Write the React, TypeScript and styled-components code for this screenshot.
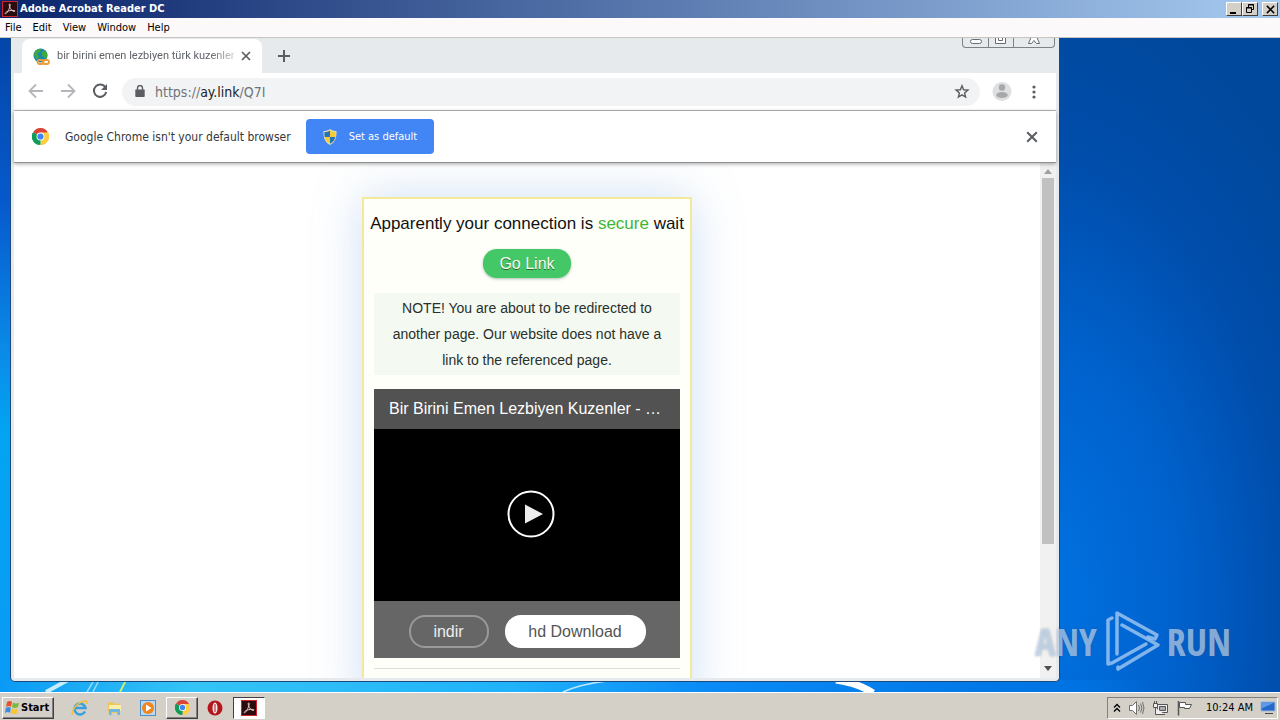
import React from "react";
import styled, { createGlobalStyle, css } from "styled-components";

const ui = `"DejaVu Sans Condensed", "DejaVu Sans", sans-serif`;
const web = `"Liberation Sans", Arial, sans-serif`;

const Global = createGlobalStyle`
  * { box-sizing: border-box; }
  body { margin: 0; font-family: ${ui}; font-size: 11px; }
  button { font: inherit; padding: 0; border: 0; background: none; color: inherit; }
  svg { display: block; flex: none; }
  h1, p { margin: 0; }
`;

const Screen = styled.div`
  display: flex;
  flex-direction: column;
  height: 100vh;
  overflow: hidden;
`;

const TitleBar = styled.header`
  display: flex;
  align-items: center;
  gap: 2px;
  flex: none;
  height: 18px;
  padding: 0 2px 0 2px;
  background: linear-gradient(90deg, #0a246a, #a6caf0);
  color: #fff;
`;

const AppTitle = styled.h1`
  flex: 1;
  font-size: 11px;
  line-height: 16px;
  font-weight: 700;
`;

const WindowButton = styled.button<{ $spaced?: boolean }>`
  display: grid;
  place-items: center;
  width: 16px;
  height: 14px;
  margin-left: ${(p) => (p.$spaced ? 2 : -2)}px;
  background: #d4d0c8;
  border: 1px solid;
  border-color: #fff #404040 #404040 #fff;
  color: #000;
`;

const MenuBar = styled.nav`
  display: flex;
  align-items: center;
  gap: 11px;
  flex: none;
  height: 20px;
  padding: 0 5px;
  background: #fbf9fa;
  border-bottom: 1px solid #c9c6c2;
`;

const MenuItem = styled.button`
  color: #000;
  line-height: 16px;
  font-size: 11px;
`;

const Desktop = styled.main`
  position: relative;
  display: flex;
  flex: 1;
  min-height: 0;
  padding: 0 220px 10px 10px;
  background:
    linear-gradient(90deg, #0a9af5 0, #35c4f5 15%, #20b2fa 40%, #0a8bf5 55%, #0074e4 82%, transparent 90%) bottom / 100% 12px no-repeat,
    linear-gradient(180deg, #0446a8, #0659cc 25%, #0a8be8 48%, #02a4f2 60%, #0a9af5) left / 12px 100% no-repeat,
    radial-gradient(ellipse 360px 620px at 1030px 560px, #0074e4 0, #0061cc 42%, #004dab 72%, transparent 100%),
    linear-gradient(160deg, #00489c 82%, #0b4680 87%, #01408c 94%, #004aa5);
`;

const Streaks = styled.svg`
  position: absolute;
  left: 0;
  bottom: 0;
`;

const BrowserWindow = styled.section`
  position: relative;
  display: flex;
  flex-direction: column;
  flex: 1;
  min-width: 0;
  padding: 0 3px 3px 3px;
  background: #e7eaed;
  border: 1px solid #1c4a7c;
  border-top: 0;
  border-radius: 0 0 5px 5px;
`;

const TabStrip = styled.div`
  display: flex;
  align-items: center;
  justify-content: space-between;
  flex: none;
  height: 35px;
  padding-left: 8px;
`;

const TabGroup = styled.div`
  display: flex;
  align-items: center;
  gap: 15px;
  height: 100%;
`;

const Tab = styled.div`
  display: flex;
  align-items: center;
  gap: 7px;
  width: 240px;
  height: 34px;
  margin-top: 1px;
  padding: 0 11px 0 11px;
  background: #fff;
  border-radius: 8px 8px 0 0;
  color: #5f6368;
`;

const TabTitle = styled.span`
  flex: 1;
  overflow: hidden;
  white-space: nowrap;
  font-family: Roboto, sans-serif;
  font-size: 11px;
  line-height: 16px;
  mask-image: linear-gradient(90deg, #000 86%, rgba(0, 0, 0, 0.3));
`;

const IconButton = styled.button`
  display: grid;
  place-items: center;
  color: #5a5e62;
`;

const Caption = styled.div`
  display: flex;
  align-self: flex-start;
  height: 10px;
  margin-right: 1px;
  border: 1px solid #7d8286;
  border-top: 0;
  border-radius: 0 0 4px 4px;
`;

const CaptionButton = styled.button<{ $wide?: boolean }>`
  display: grid;
  place-items: start center;
  width: ${(p) => (p.$wide ? 41 : 25)}px;
  height: 9px;
  & + & { border-left: 1px solid #7d8286; }
`;

const Toolbar = styled.div`
  display: flex;
  align-items: center;
  gap: 12px;
  flex: none;
  height: 38px;
  padding: 0 12px 0 12px;
  background: #fff;
  border-bottom: 1px solid #b6b8ba;
`;

const NavGroup = styled.div`
  display: flex;
  gap: 12px;
`;

const AddressBar = styled.div`
  display: flex;
  align-items: center;
  gap: 8px;
  flex: 1;
  height: 28px;
  padding: 0 10px 0 11px;
  background: #f1f3f4;
  border-radius: 14px;
  color: #6f7378;
`;

const Url = styled.span`
  flex: 1;
  font-size: 14px;
  line-height: 20px;
  b { font-weight: 400; color: #202124; }
`;

const InfoBar = styled.div`
  position: relative;
  display: flex;
  align-items: center;
  flex: none;
  gap: 12px;
  height: 52px;
  padding: 0 18px 0 18px;
  background: #fff;
  border-bottom: 1px solid #8f9193;
  box-shadow: 0 1px 4px rgba(0, 0, 0, 0.35);
`;

const InfoText = styled.p`
  flex: none;
  margin: 0 3px 0 4px;
  font-size: 12px;
  line-height: 16px;
  color: #35373a;
`;

const DefaultButton = styled.button`
  display: flex;
  align-items: center;
  gap: 12px;
  height: 35px;
  padding: 0 17px;
  border-radius: 4px;
  background: #4285f4;
  color: #fff;
  font-size: 11px;
`;

const Spacer = styled.span`
  flex: 1;
`;

const Viewport = styled.div`
  display: flex;
  flex: 1;
  min-height: 0;
  background: #fff;
`;

const Page = styled.div`
  display: flex;
  justify-content: center;
  align-items: flex-start;
  flex: 1;
  overflow: hidden;
  padding-top: 34px;
  font-family: ${web};
`;

const Card = styled.article`
  display: flex;
  flex-direction: column;
  align-items: center;
  width: 330px;
  padding: 12px 10px 40px;
  background: #fffffa;
  border: 2px solid #f4e99b;
  box-shadow: 0 0 45px rgba(120, 165, 225, 0.36);
`;

const Status = styled.p`
  font-size: 17px;
  line-height: 26px;
  white-space: nowrap;
  color: #111;
  span { color: #3cb639; }
`;

const GoButton = styled.button`
  width: 88px;
  height: 29px;
  margin: 12px 0 15px;
  border-radius: 14px;
  background: #44c767;
  box-shadow: 0 1px 3px rgba(40, 90, 60, 0.4);
  color: #f4fff4;
  font-size: 16px;
  text-shadow: 0 1px 0 #2f6627;
`;

const Note = styled.p`
  align-self: stretch;
  padding: 2px 12px;
  background: #f4faf2;
  color: #2a302a;
  font-size: 14px;
  line-height: 26px;
  text-align: center;
`;

const Player = styled.div`
  align-self: stretch;
  margin: 14px 0 10px;
  background: #000;
`;

const PlayerTitle = styled.div`
  padding: 0 15px;
  background: #525252;
  color: #fff;
  font-size: 16px;
  line-height: 40px;
  white-space: nowrap;
`;

const Stage = styled.div`
  display: grid;
  place-items: center;
  height: 172px;
  padding: 0 0 2px 8px;
  color: #fff;
`;

const PlayerActions = styled.div`
  display: flex;
  justify-content: center;
  gap: 16px;
  padding: 14px 0 10px;
  background: #666;
`;

const Pill = styled.button<{ $solid?: boolean }>`
  width: ${(p) => (p.$solid ? 141 : 80)}px;
  height: 33px;
  border-radius: 16px;
  font-size: 16px;
  ${(p) =>
    p.$solid
      ? css`background: #fff; color: #555;`
      : css`border: 2px solid #999; color: #eee;`}
`;

const Rule = styled.hr`
  align-self: stretch;
  margin: 0;
  border: 0;
  border-top: 1px solid #dcdedc;
`;

const ScrollTrack = styled.div`
  display: flex;
  flex-direction: column;
  align-items: center;
  flex: none;
  width: 16px;
  padding: 6px 0 7px;
  background: #f1f1f1;
`;

const ScrollThumb = styled.div`
  width: 12px;
  height: 73%;
  margin: 4px 0 auto;
  background: #c1c1c1;
`;

const Watermark = styled.div`
  position: absolute;
  right: 49px;
  bottom: 18px;
  display: flex;
  align-items: center;
  gap: 7px;
  color: rgba(200, 222, 245, 0.65);
  font-family: "Open Sans Condensed", "Liberation Sans Narrow", "Liberation Sans", sans-serif;
  font-size: 38px;
  font-weight: 300;
  line-height: 66px;
  text-shadow: 0 0 3px rgba(60, 80, 110, 0.4);
`;

const Taskbar = styled.footer`
  display: flex;
  align-items: center;
  flex: none;
  height: 28px;
  padding: 2px 2px 0;
  background: #d4d0c8;
  border-top: 1px solid #fff;
`;

const StartButton = styled.button`
  display: flex;
  align-items: center;
  gap: 1px;
  width: 52px;
  height: 22px;
  margin-right: 10px;
  padding-left: 2px;
  border: 1px solid;
  border-color: #fff #404040 #404040 #fff;
  box-shadow: inset -1px -1px #808080;
  font-weight: 700;
  font-size: 11px;
`;

const TaskButton = styled.button<{ $state?: "open" | "active" }>`
  display: grid;
  place-items: center;
  width: 32px;
  height: 22px;
  margin-right: ${(p) => (p.$state ? 1 : 2)}px;
  border: 1px solid transparent;
  ${(p) => p.$state === "open" && css`
    border-color: #fff #404040 #404040 #fff;
    box-shadow: inset -1px -1px #808080;
  `}
  ${(p) => p.$state === "active" && css`
    background: #fff;
    border-color: #404040 #fff #fff #404040;
  `}
`;

const Tray = styled.div`
  display: flex;
  align-items: center;
  gap: 7px;
  height: 22px;
  margin-left: auto;
  padding: 0 1px 0 5px;
  border: 1px solid;
  border-color: #808080 #fff #fff #808080;
`;

const Clock = styled.time`
  margin-left: 6px;
  font-size: 11px;
  line-height: 16px;
`;

const AcrobatIcon = ({ size = 16 }: { size?: number }) => (
  <svg width={size} height={size} viewBox="0 0 16 16">
    <rect x=".5" y=".5" width="15" height="15" fill="#2b0b0e" stroke="#d3222a" />
    <path d="M3 12.500c1-2 5-3.500 9.500-3 1 .3.500 1.300-.8 1C9 9.500 7 6 7.200 3.500c.4-1.300 1.300-.6 1 .8C7.500 8 5 12.500 3.400 13" fill="none" stroke="#e3cccc" />
  </svg>
);

const ChromeIcon = ({ size = 17 }: { size?: number }) => (
  <svg width={size} height={size} viewBox="0 0 24 24">
    <path d="M12 12 1.600 6A12 12 0 0 1 22.400 6z" fill="#db4437" />
    <path d="M12 12 22.400 6A12 12 0 0 1 12 24z" fill="#ffcd40" />
    <path d="M12 12v12A12 12 0 0 1 1.600 6z" fill="#0f9d58" />
    <path d="M12 6.500h10.700A12 12 0 0 1 12 24l5-9z" fill="#ffcd40" />
    <path d="M1.600 6 7 15l5 3-3.500 5.500A12 12 0 0 1 1.600 6z" fill="#0f9d58" />
    <circle cx="12" cy="12" r="5.600" fill="#fff" />
    <circle cx="12" cy="12" r="4.400" fill="#4285f4" />
  </svg>
);

const GlobeIcon = () => (
  <svg width="17" height="17" viewBox="0 0 17 17">
    <circle cx="7.500" cy="7.500" r="7" fill="#1787b5" />
    <path d="M2 3.500C4 .8 7 .3 8 1L7 4 4 6l2 2-1 4C2 10 0 7 2 3.500zM9 4l3-2c3 3 3 7 1 9l-2-2-2-1z" fill="#41a83c" />
    <g fill="none" stroke="#ee9b3a" strokeWidth="1.800"><rect x="4.500" y="12" width="6" height="4" rx="2" /><rect x="10" y="12" width="6" height="4" rx="2" /></g>
  </svg>
);

const ShieldIcon = () => (
  <svg width="14" height="16" viewBox="0 0 14 16">
    <path d="M7 0c2 1.500 4 2 6.500 2 .3 6-1 11-6.500 14C1.500 13 .2 8 .5 2 3 2 5 1.500 7 0z" fill="#e8e0b0" />
    <path d="M7 1.500V8H1.600c-.2-1.500-.3-3-.2-5C3.500 3 5.500 2.500 7 1.500zM7 8h5.400c-.7 3-2.400 5.200-5.400 6.800z" fill="#2574b9" />
    <path d="M7 1.500C8.500 2.500 10.500 3 12.600 3c.1 2 0 3.500-.2 5H7zM7 8v6.800C4 13.200 2.300 11 1.600 8z" fill="#f6cb35" />
  </svg>
);

const Cross = ({ size = 10, width = 2 }: { size?: number; width?: number }) => (
  <svg width={size} height={size} viewBox="0 0 10 10">
    <path d="M1 1l8 8M9 1 1 9" stroke="currentColor" strokeWidth={width} />
  </svg>
);

const Arrow = ({ flip }: { flip?: boolean }) => (
  <svg width="20" height="20" viewBox="0 0 20 20" fill="none" stroke="#b4b6b9" strokeWidth="1.800">
    <path d={flip ? "M3 9h13M10 2.500 16.500 9 10 15.500" : "M17 9H4M10 2.500 3.500 9l6.500 6.500"} />
  </svg>
);

const ScrollArrow = ({ down }: { down?: boolean }) => (
  <svg width="8" height="5" viewBox="0 0 8 5">
    <path d={down ? "M0 0h8L4 5z" : "M0 5h8L4 0z"} fill={down ? "#505050" : "#a0a0a0"} />
  </svg>
);

export default function App() {
  return (
    <Screen>
      <Global />
      <TitleBar>
        <AcrobatIcon />
        <AppTitle>Adobe Acrobat Reader DC</AppTitle>
        <WindowButton aria-label="Minimize">
          <svg width="10" height="9"><path d="M1 7h6v2H1z" /></svg>
        </WindowButton>
        <WindowButton aria-label="Restore">
          <svg width="10" height="10" fill="none" stroke="#000"><path d="M3.500 3V.5h5v5H7M3 1h6" /><path d="M1.500 3.500h5v5h-5zM1 4h6" /></svg>
        </WindowButton>
        <WindowButton $spaced aria-label="Close"><Cross size={9} width={1.700} /></WindowButton>
      </TitleBar>
      <MenuBar>
        {["File", "Edit", "View", "Window", "Help"].map((m) => (
          <MenuItem key={m}>{m}</MenuItem>
        ))}
      </MenuBar>
      <Desktop>
        <Streaks width="1100" height="12" viewBox="0 0 1100 12" fill="none" stroke="#e8f9ff" strokeWidth="3">
          <path d="M46 12 68 0" opacity=".85" strokeWidth="4" />
          <path d="M87 12 94 0M93 12 99 0" opacity=".6" strokeWidth="1.500" />
          <path d="M120 12 126 0" stroke="#c8ee70" strokeWidth="2" />
          <path d="M563 12q18-8 44-11" opacity=".8" strokeWidth="1.500" />
          <path d="M836 0q22 3 37 13" stroke="#fff" strokeWidth="7" />
        </Streaks>
        <BrowserWindow>
          <TabStrip>
            <TabGroup>
              <Tab>
                <GlobeIcon />
                <TabTitle>bir birini emen lezbiyen türk kuzenler</TabTitle>
                <IconButton aria-label="Close tab"><Cross width={1.700} /></IconButton>
              </Tab>
              <IconButton aria-label="New tab">
                <svg width="14" height="14"><path d="M7 1v12M1 7h12" stroke="currentColor" strokeWidth="2" /></svg>
              </IconButton>
            </TabGroup>
            <Caption>
              <CaptionButton aria-label="Minimize window">
                <svg width="14" height="8"><rect x="1.500" y="1.500" width="11" height="4" rx="2" fill="#fff" stroke="#666b70" /></svg>
              </CaptionButton>
              <CaptionButton aria-label="Maximize window">
                <svg width="14" height="8" fill="#fff" stroke="#666b70"><path d="M1.500-1v6.500h10V-1" /><path d="M4.500-1v3.500h4V-1" /></svg>
              </CaptionButton>
              <CaptionButton $wide aria-label="Close window">
                <svg width="14" height="8" fill="#fff" stroke="#666b70"><path d="M4-.5 1.500 5.500h3L7 2.500l2.500 3h3L10-.5" /></svg>
              </CaptionButton>
            </Caption>
          </TabStrip>
          <Toolbar>
            <NavGroup>
              <IconButton aria-label="Back"><Arrow /></IconButton>
              <IconButton aria-label="Forward"><Arrow flip /></IconButton>
              <IconButton aria-label="Reload">
                <svg width="20" height="20" viewBox="0 0 20 20"><path d="M15.500 5.500A6.200 6.200 0 1 0 16.200 10" fill="none" stroke="currentColor" strokeWidth="2" /><path d="M17 2v6h-6z" fill="currentColor" /></svg>
              </IconButton>
            </NavGroup>
            <AddressBar>
              <svg width="14" height="14" viewBox="0 0 14 14"><path d="M3 4.500h8q.7 0 .7.700v6q0 .8-.7.800H3q-.7 0-.7-.8v-6q0-.7.700-.7z" fill="#5a5e62" /><path d="M4.500 5V3a2.500 2.500 0 0 1 5 0v2" fill="none" stroke="#5a5e62" strokeWidth="1.400" /></svg>
              <Url>https://<b>ay.link</b>/Q7I</Url>
              <IconButton aria-label="Bookmark this page">
                <svg width="16" height="16" viewBox="0 0 16 16"><path d="M8 1.800l1.600 4 4.300.3-3.300 2.800 1 4.200L8 10.900l-3.600 2.200 1-4.200L2.100 6.100l4.300-.3z" fill="none" stroke="currentColor" strokeWidth="1.400" /></svg>
              </IconButton>
            </AddressBar>
            <IconButton aria-label="Profile">
              <svg width="20" height="20"><circle cx="10" cy="9.500" r="9.500" fill="#dedfe0" /><circle cx="10" cy="5.500" r="3.200" fill="#a6a8aa" /><ellipse cx="10" cy="13" rx="5.800" ry="3" fill="#a6a8aa" /></svg>
            </IconButton>
            <IconButton aria-label="Menu">
              <svg width="20" height="16" fill="currentColor"><circle cx="10" cy="3" r="1.600" /><circle cx="10" cy="8" r="1.600" /><circle cx="10" cy="13" r="1.600" /></svg>
            </IconButton>
          </Toolbar>
          <InfoBar>
            <ChromeIcon />
            <InfoText>Google Chrome isn't your default browser</InfoText>
            <DefaultButton><ShieldIcon />Set as default</DefaultButton>
            <Spacer />
            <IconButton aria-label="Dismiss"><Cross size={12} width={1.700} /></IconButton>
          </InfoBar>
          <Viewport>
            <Page>
              <Card>
                <Status>Apparently your connection is <span>secure</span> wait</Status>
                <GoButton>Go Link</GoButton>
                <Note>NOTE! You are about to be redirected to another page. Our website does not have a link to the referenced page.</Note>
                <Player>
                  <PlayerTitle>Bir Birini Emen Lezbiyen Kuzenler - …</PlayerTitle>
                  <Stage>
                    <IconButton aria-label="Play">
                      <svg width="48" height="48"><circle cx="24" cy="24" r="22.500" fill="none" stroke="#fff" strokeWidth="2" /><path d="M18 14.500 36 24 18 33.500z" fill="#ededed" /></svg>
                    </IconButton>
                  </Stage>
                  <PlayerActions>
                    <Pill>indir</Pill>
                    <Pill $solid>hd Download</Pill>
                  </PlayerActions>
                </Player>
                <Rule />
              </Card>
            </Page>
            <ScrollTrack>
              <ScrollArrow />
              <ScrollThumb />
              <ScrollArrow down />
            </ScrollTrack>
          </Viewport>
        </BrowserWindow>
        <Watermark>
          <span>ANY</span>
          <svg width="56" height="62" viewBox="0 0 56 62" fill="none" stroke="#a3c8f2" strokeOpacity=".8" strokeWidth="3.500" strokeLinejoin="round" strokeLinecap="round">
            <path d="M8 8 4 10v44l4-1L42 34" />
            <path d="M13 44V3l40 22-2 4-7-2" />
            <path d="M18 15l36 20-40 24 0-2" />
          </svg>
          <span>RUN</span>
        </Watermark>
      </Desktop>
      <Taskbar>
        <StartButton>
          <svg width="15" height="15" viewBox="0 0 15 15">
            <path d="M2 2q3-2 5 0L6 7Q4 5 1 7z" fill="#e5532d" /><path d="M8 2.500q3 2 6 0L13 7q-3 2-6 .3z" fill="#7cb83a" /><path d="M.8 8q3-2 5 0L5 13q-2-2-5 0z" fill="#3c8edc" /><path d="M6.800 8.500q3 2 6 0L12 13q-3 2-6 .3z" fill="#f7c52d" />
          </svg>
          Start
        </StartButton>
        <TaskButton aria-label="Internet Explorer">
          <svg width="18" height="18" viewBox="0 0 18 18" fill="none"><path d="M14 12.500A5.500 5.500 0 1 1 14.500 9H5" stroke="#39a0df" strokeWidth="2.600" /><path d="M2 15.500C-1 13 6 4 12 2.500c3-1 5-.8 3.500 2.500" stroke="#f0bf3a" strokeWidth="1.400" /></svg>
        </TaskButton>
        <TaskButton aria-label="Explorer">
          <svg width="17" height="16" viewBox="0 0 17 16"><path d="M2 2h5l1 1.500h6V13H2z" fill="#e9c95e" /><path d="M3 5h12v6H3z" fill="#fbeeab" /><path d="M3 9h11v6h-2.500v-3h-6v3H3z" fill="#71b6df" /></svg>
        </TaskButton>
        <TaskButton aria-label="Media Player">
          <svg width="16" height="16"><rect x=".5" y=".5" width="15" height="15" fill="#b9d9f3" stroke="#4f8fc8" /><circle cx="8" cy="8" r="6" fill="#f2861c" /><path d="M6 4.500 11.500 8 6 11.500z" fill="#fff" /></svg>
        </TaskButton>
        <TaskButton $state="open" aria-label="Chrome"><ChromeIcon size={15} /></TaskButton>
        <TaskButton aria-label="Opera">
          <svg width="16" height="16"><circle cx="8" cy="8" r="7.500" fill="#b3161b" /><ellipse cx="8" cy="8" rx="2.500" ry="5.500" fill="#f6e9e6" /><path d="M7.500 4h1v8h-1z" fill="#b3161b" /></svg>
        </TaskButton>
        <TaskButton $state="active" aria-label="Acrobat Reader"><AcrobatIcon /></TaskButton>
        <Tray>
          <svg width="8" height="10" fill="none" stroke="#000" strokeWidth="1.300"><path d="M1 4.500 4 1.500l3 3M1 8.500l3-3 3 3" /></svg>
          <svg width="17" height="16" fill="#fff" stroke="#6f6f6f"><path d="M1.500 5.500h3l4-4v13l-4-4h-3z" /><path d="M10.500 5q2 3 0 6M12.500 3.500q3 4.500 0 9M14.500 2q3 6 0 12" fill="none" /></svg>
          <svg width="17" height="16" fill="#eee" stroke="#555"><path d="M5.500 4.500h10v8h-10z" /><path d="M7.500 6.500h6v4h-6z" fill="#aaa" /><path d="M1.500 3.500h4v4h-4zM2.500 1v2M4.500 1v2M3.500 8v6.500H13" /></svg>
          <svg width="17" height="16" fill="#fff" stroke="#555"><path d="M2.500 1v14.500" strokeWidth="1.500" /><path d="M3.500 2.500h6v2h6l-2 4h-5v-1h-5z" /></svg>
          <Clock>10:24 AM</Clock>
          <svg width="16" height="14"><path d="M1 1h14v9H1z" fill="#2568c8" stroke="#9bb7d8" /><path d="M1.500 1.500h13l-13 6z" fill="#5f9be8" /><path d="M5 12h8v1H5z" fill="#445" /></svg>
        </Tray>
      </Taskbar>
    </Screen>
  );
}
